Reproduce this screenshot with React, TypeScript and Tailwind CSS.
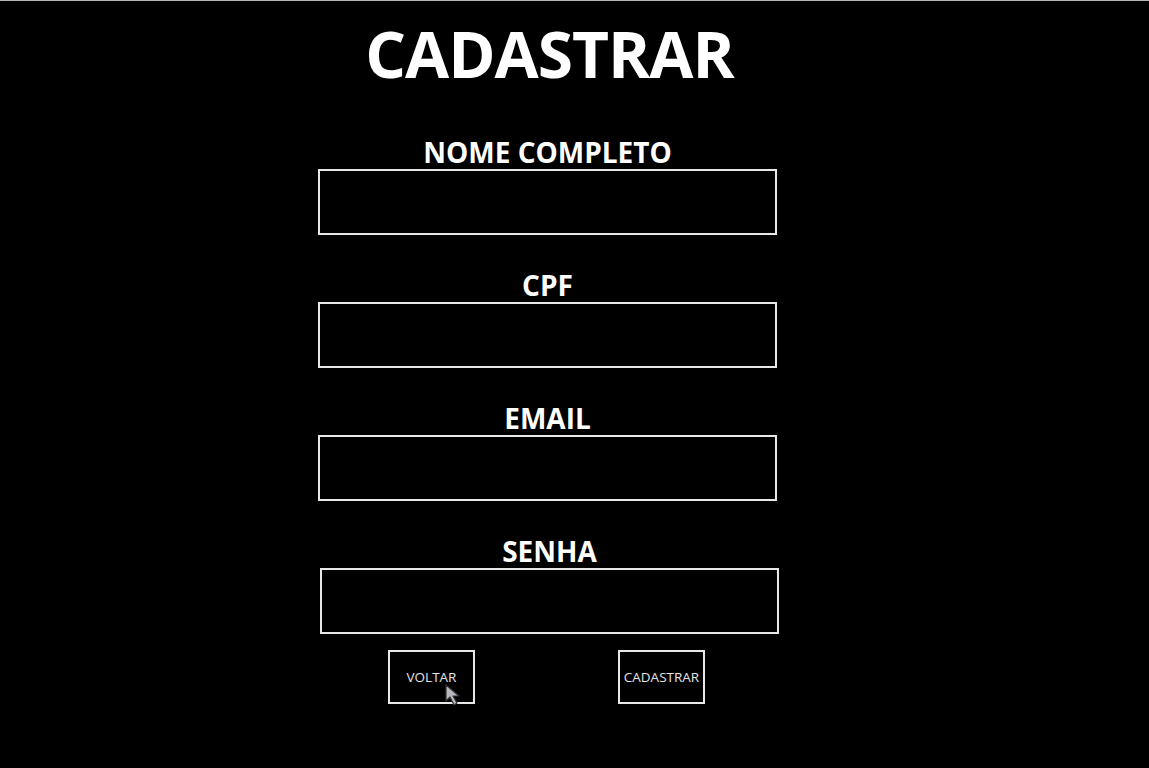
import React from 'react';

const fields = ['NOME COMPLETO', 'CPF', 'EMAIL', 'SENHA'];

const Field: React.FC<{ label: string; shift?: boolean }> = ({ label, shift }) => (
  <div className={`flex flex-col items-center ${shift ? 'translate-x-[2px]' : ''}`}>
    <label className="text-[28px] font-bold leading-[34px] text-white">{label}</label>
    <input
      type="text"
      className="w-[459px] h-[66px] bg-black border-2 border-[#e8e8e8] outline-none text-white px-3"
    />
  </div>
);

const App: React.FC = () => {
  return (
    <div className="min-h-[768px] bg-black text-white font-['Open_Sans',sans-serif] relative">
      <div className="h-px bg-[#b5b5b5]" />
      <div className="w-[1099px] flex flex-col items-center">
        <h1 className="text-[64px] font-bold tracking-[-1px] leading-[90px] mt-[8px]">CADASTRAR</h1>

        <div className="flex flex-col gap-[33px] mt-[36px] -ml-[4px]">
          {fields.map((f, i) => (
            <Field key={f} label={f} shift={i === 3} />
          ))}
        </div>

        <div className="flex gap-[143px] mt-[16px] -ml-[6px]">
          <button className="w-[87px] h-[54px] border-2 border-[#e8e8e8] text-[13.5px] text-[#e4e4e4]">
            VOLTAR
          </button>
          <button className="w-[87px] h-[54px] border-2 border-[#e8e8e8] text-[13.5px] text-[#e4e4e4]">
            CADASTRAR
          </button>
        </div>
      </div>

      {/* mouse pointer caught in the screenshot */}
      <svg className="absolute left-[445px] top-[684px]" width="22" height="24" viewBox="0 0 22 24">
        <path d="M1 1 L1 17 L5 13 L9 21 L12 19 L8 12 L14 12 Z" fill="#b8b8c0" stroke="#333" strokeWidth="1.2" strokeLinejoin="round" />
      </svg>
    </div>
  );
};

export default App;
